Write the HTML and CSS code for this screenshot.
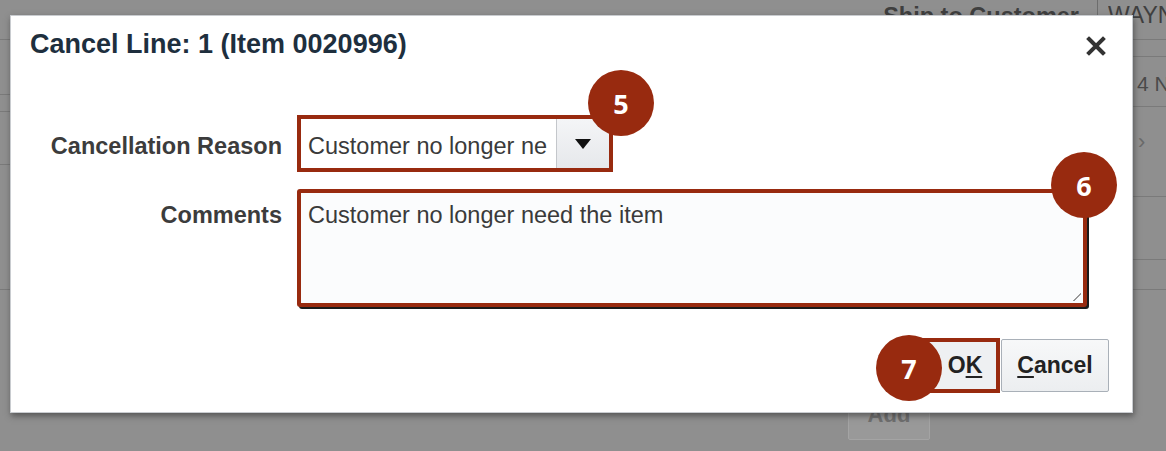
FILE: index.html
```html
<!DOCTYPE html>
<html lang="en">
<head>
<meta charset="utf-8">
<title>Cancel Line</title>
<link rel="stylesheet" href="styles.css">
</head>
<body>
<div class="page">
  <div class="bg-left">
    <div class="bg-row h40"></div>
    <div class="bg-row h55"></div>
    <div class="bg-row h17"></div>
    <div class="bg-row h53"></div>
    <div class="bg-row h125"></div>
  </div>
  <div class="bg-mid">
    <div class="bg-top">
      <span class="bg-label">Ship to Customer</span>
      <span class="bg-sep"></span>
      <span class="bg-value">WAYN</span>
    </div>
    <div class="bg-fill"></div>
    <div class="bg-actions"><span class="bg-add">Add</span></div>
  </div>
  <div class="bg-right">
    <div class="bg-row h20"></div>
    <div class="bg-row h17"></div>
    <div class="bg-row h50 bg-text">4 N</div>
    <div class="bg-row h90 bg-arrow">&#8250;</div>
    <div class="bg-row h63"></div>
    <div class="bg-row h30"></div>
  </div>
</div>

<div class="dialog">
  <div class="dlg-head">
    <h1 class="dlg-title">Cancel Line: 1 (Item 0020996)</h1>
    <span class="dlg-close" aria-label="Close">
      <svg width="20" height="20" viewBox="0 0 20 20"><path d="M3 3 L17 17 M17 3 L3 17" stroke="#333" stroke-width="4" stroke-linecap="square" fill="none"/></svg>
    </span>
  </div>
  <div class="form">
    <label class="f-label row1">Cancellation Reason</label>
    <div class="f-field row1">
      <div class="select hl">
        <span class="select-text">Customer no longer ne</span>
        <span class="select-btn"><svg width="18" height="12" viewBox="0 0 18 12"><path d="M1 1 H17 L9 11 Z" fill="#111"/></svg></span>
        <span class="badge b5">5</span>
      </div>
    </div>
    <label class="f-label row2">Comments</label>
    <div class="f-field row2">
      <div class="textarea hl">
        <span class="ta-text">Customer no longer need the item</span>
        <span class="grip"></span>
        <span class="badge b6">6</span>
      </div>
    </div>
  </div>
  <div class="dlg-foot">
    <div class="btn btn-ok"><span>O<u>K</u></span><span class="badge b7">7</span></div>
    <div class="btn btn-cancel"><span><u>C</u>ancel</span></div>
  </div>
</div>
</body>
</html>
```

FILE: styles.css
```css
* { box-sizing: border-box; }
html, body { margin: 0; padding: 0; }
body {
  width: 1166px;
  height: 451px;
  overflow: hidden;
  position: relative;
  background: #8f8f8f;
  font-family: "Liberation Sans", Arial, sans-serif;
}

/* dimmed background page */
.page {
  display: grid;
  grid-template-columns: 10px 1123px 33px;
  height: 451px;
}
.bg-left, .bg-right { display: flex; flex-direction: column; }
.bg-row { border-bottom: 1px solid #7a7a7a; flex: none; }
.h17 { height: 17px; }
.h20 { height: 40px; }
.h30 { height: 30px; }
.h40 { height: 40px; }
.h50 { height: 50px; }
.h53 { height: 53px; }
.h55 { height: 55px; }
.h63 { height: 63px; }
.h90 { height: 90px; }
.h125 { height: 125px; }
.bg-text {
  color: #4a4a4a;
  font-size: 21px;
  padding: 15px 0 0 4px;
  white-space: nowrap;
}
.bg-arrow {
  color: #6a6a6a;
  font-size: 22px;
  padding: 22px 0 0 5px;
}
.bg-mid { display: flex; flex-direction: column; }
.bg-top {
  display: flex;
  justify-content: flex-end;
  align-items: flex-start;
  height: 40px;
  margin-right: -33px;
  overflow: hidden;
  white-space: nowrap;
}
.bg-label {
  font-size: 23.5px;
  font-weight: bold;
  color: #3f3f3f;
  margin-top: 3px;
}
.bg-sep {
  width: 1px;
  height: 26px;
  background: #6d6d6d;
  margin: 0 10px 0 18px;
}
.bg-value {
  font-size: 23px;
  color: #3f3f3f;
  margin-top: 2px;
  width: 58px;
  overflow: hidden;
}
.bg-fill { flex: 1; }
.bg-actions {
  display: flex;
  height: 56px;
  padding-left: 838px;
  padding-bottom: 11px;
}
.bg-add {
  width: 82px;
  background: #999;
  border: 1px solid #a4a4a4;
  border-radius: 2px;
  color: #6f6f6f;
  font-weight: bold;
  font-size: 22px;
  text-align: center;
  padding-top: 6px;
}

/* dialog */
.dialog {
  position: absolute;
  left: 10px;
  top: 15px;
  width: 1123px;
  height: 398px;
  background: #fff;
  border: 1px solid #c9ccd0;
  box-shadow: 1px 3px 6px rgba(40, 40, 40, 0.55);
  display: flex;
  flex-direction: column;
}
.dlg-head {
  display: flex;
  justify-content: space-between;
  align-items: center;
  padding: 0 26px 0 19px;
  height: 57px;
}
.dlg-title {
  margin: 0;
  font-size: 27px;
  font-weight: bold;
  color: #1e2f3e;
}
.dlg-close { display: flex; margin-top: 2px; }

.form {
  display: grid;
  grid-template-columns: 271px 790px;
  column-gap: 15px;
  row-gap: 17px;
  margin-top: 42px;
  align-items: start;
}
.f-label {
  text-align: right;
  font-size: 23.5px;
  font-weight: bold;
  color: #3c3c3c;
  white-space: nowrap;
}
.f-label.row1 { padding-top: 18px; }
.f-label.row2 { padding-top: 13px; }

.hl { border: 4px solid #982a0f; }
.select {
  position: relative;
  display: flex;
  width: 316px;
  height: 57px;
  background: #fff;
}
.select-text {
  flex: 1;
  font-size: 23.5px;
  color: #3a3a3a;
  padding: 14px 0 0 7px;
  white-space: nowrap;
  overflow: hidden;
}
.select-btn {
  width: 53px;
  display: flex;
  align-items: center;
  justify-content: center;
  background: linear-gradient(#f4f5f7, #e6e8eb);
  border-left: 1px solid #c4c7cb;
}
.textarea {
  position: relative;
  width: 790px;
  height: 118px;
  background: #fbfcfd;
  border-radius: 3px;
  box-shadow: 2px 2px 0 #1a1a1a;
  padding: 9px 0 0 7px;
}
.ta-text {
  font-size: 23.5px;
  color: #3a3a3a;
}
.grip {
  position: absolute;
  right: 2px;
  bottom: 2px;
  width: 8px;
  height: 8px;
  background: linear-gradient(135deg, transparent 45%, #999 45%, #999 58%, transparent 58%);
}

.badge {
  position: absolute;
  width: 66px;
  height: 66px;
  border-radius: 50%;
  background: #982a0f;
  color: #fff;
  font-family: "Open Sans", "Liberation Sans", sans-serif;
  font-weight: bold;
  font-size: 27px;
  display: flex;
  align-items: center;
  justify-content: center;
  z-index: 2;
}
.b5 { right: -45px; top: -49px; }
.b6 { right: -34px; top: -41px; }
.b7 { left: -46px; top: -7px; }

.dlg-foot {
  display: flex;
  justify-content: flex-end;
  align-items: center;
  gap: 1px;
  padding-right: 23px;
  margin-top: 31px;
}
.btn {
  position: relative;
  display: flex;
  align-items: center;
  justify-content: center;
  font-size: 23px;
  font-weight: bold;
  color: #222;
}
.btn u { text-underline-offset: 3px; }
.btn-ok {
  width: 82px;
  height: 55px;
  border: 4px solid #982a0f;
  background: #eef0f2;
  padding-left: 12px;
}
.btn-cancel {
  width: 108px;
  height: 53px;
  border: 1px solid #a9b0b8;
  background: linear-gradient(#f7f8f9, #eceef0);
  border-radius: 2px;
}
```
